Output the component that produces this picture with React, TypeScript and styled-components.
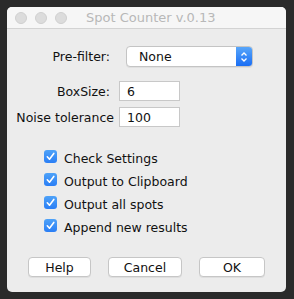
import React from "react";
import styled, { createGlobalStyle } from "styled-components";

const Global = createGlobalStyle`
  html, body { margin: 0; padding: 0; background: #2a2a2a; }
  body { font-family: "DejaVu Sans", "Liberation Sans", sans-serif; }
  * { box-sizing: border-box; }
`;

const Page = styled.div`
  width: 294px;
  height: 299px;
  padding: 7px 0 0 7px;
  background: #2a2a2a;
`;

const Window = styled.div`
  width: 279px;
  height: 285px;
  background: #ececec;
  border-radius: 5px;
  overflow: hidden;
  display: flex;
  flex-direction: column;
`;

const TitleBar = styled.div`
  height: 22px;
  background: #f6f6f6;
  border-bottom: 1px solid #d3d3d3;
  display: flex;
  align-items: center;
  padding-left: 8px;
`;

const Lights = styled.div`
  display: flex;
  gap: 8px;
`;

const Light = styled.span`
  width: 12px;
  height: 12px;
  border-radius: 50%;
  background: #dcdcdc;
  border: 1px solid #cfcfcf;
`;

const Title = styled.div`
  margin-left: 19px;
  font-size: 13px;
  color: #b8b8b8;
  font-family: "DejaVu Sans", sans-serif;
`;

const Content = styled.div`
  display: flex;
  flex-direction: column;
  padding-top: 17px;
  font-size: 12.5px;
  color: #111;
`;

const Row = styled.div<{ $mt?: number }>`
  display: flex;
  align-items: center;
  margin-top: ${(p) => p.$mt ?? 0}px;
`;

const Label = styled.div<{ $w: number; $pr?: number }>`
  width: ${(p) => p.$w}px;
  text-align: right;
  padding-right: ${(p) => p.$pr ?? 0}px;
  white-space: nowrap;
`;

const Select = styled.div`
  margin-left: 16px;
  width: 127px;
  height: 21px;
  display: flex;
  background: #fff;
  border: 1px solid #c4c4c4;
  border-radius: 4px;
  overflow: hidden;
  box-shadow: 0 1px 0 rgba(0, 0, 0, 0.05);
`;

const SelectText = styled.div`
  flex: 1;
  padding-left: 12px;
  display: flex;
  align-items: center;
`;

const Stepper = styled.div`
  width: 16px;
  background: linear-gradient(#58a6fa, #1a6ef4);
  display: flex;
  align-items: center;
  justify-content: center;
`;

const Input = styled.div`
  margin-left: 5px;
  width: 61px;
  height: 20px;
  background: #fff;
  border: 1px solid #c8c8c8;
  display: flex;
  align-items: center;
  padding-left: 7px;
`;

const Checks = styled.div`
  display: flex;
  flex-direction: column;
  margin-top: 18px;
  padding-left: 37px;
`;

const CheckRow = styled.div`
  height: 23px;
  display: flex;
  align-items: center;
  gap: 7px;
`;

const Box = styled.span`
  width: 13px;
  height: 13px;
  border-radius: 3px;
  background: linear-gradient(#4ea2f8, #2a7ef5);
  display: flex;
  align-items: center;
  justify-content: center;
`;

const CheckText = styled.span`
  padding-top: 4px;
`;

const Buttons = styled.div`
  display: flex;
  margin-top: 20px;
  padding-left: 21px;
`;

const Button = styled.div<{ $w: number; $ml?: number }>`
  width: ${(p) => p.$w}px;
  margin-left: ${(p) => p.$ml ?? 0}px;
  height: 20px;
  background: #fff;
  border: 1px solid #c6c6c6;
  border-radius: 4px;
  display: flex;
  align-items: center;
  justify-content: center;
  box-shadow: 0 1px 0 rgba(0, 0, 0, 0.06);
`;

const Check = () => (
  <svg width="9" height="9" viewBox="0 0 9 9">
    <path d="M1.3 4.8 L3.5 7.2 L7.8 1.4" fill="none" stroke="#fff" strokeWidth="1.6" strokeLinecap="round" strokeLinejoin="round" />
  </svg>
);

const Arrows = () => (
  <svg width="8" height="12" viewBox="0 0 8 12">
    <path d="M1.5 4.5 L4 2 L6.5 4.5 M1.5 7.5 L4 10 L6.5 7.5" fill="none" stroke="#fff" strokeWidth="1.3" />
  </svg>
);

const checks = ["Check Settings", "Output to Clipboard", "Output all spots", "Append new results"];

export default function App() {
  return (
    <Page>
      <Global />
      <Window>
        <TitleBar>
          <Lights>
            <Light />
            <Light />
            <Light />
          </Lights>
          <Title>Spot Counter v.0.13</Title>
        </TitleBar>
        <Content>
          <Row>
            <Label $w={103}>Pre-filter:</Label>
            <Select>
              <SelectText>None</SelectText>
              <Stepper>
                <Arrows />
              </Stepper>
            </Select>
          </Row>
          <Row $mt={14}>
            <Label $w={107} $pr={4}>BoxSize:</Label>
            <Input>6</Input>
          </Row>
          <Row $mt={6}>
            <Label $w={107}>Noise tolerance</Label>
            <Input>100</Input>
          </Row>
          <Checks>
            {checks.map((c) => (
              <CheckRow key={c}>
                <Box>
                  <Check />
                </Box>
                <CheckText>{c}</CheckText>
              </CheckRow>
            ))}
          </Checks>
          <Buttons>
            <Button $w={63}>Help</Button>
            <Button $w={74} $ml={17}>Cancel</Button>
            <Button $w={66} $ml={17}>OK</Button>
          </Buttons>
        </Content>
      </Window>
    </Page>
  );
}
